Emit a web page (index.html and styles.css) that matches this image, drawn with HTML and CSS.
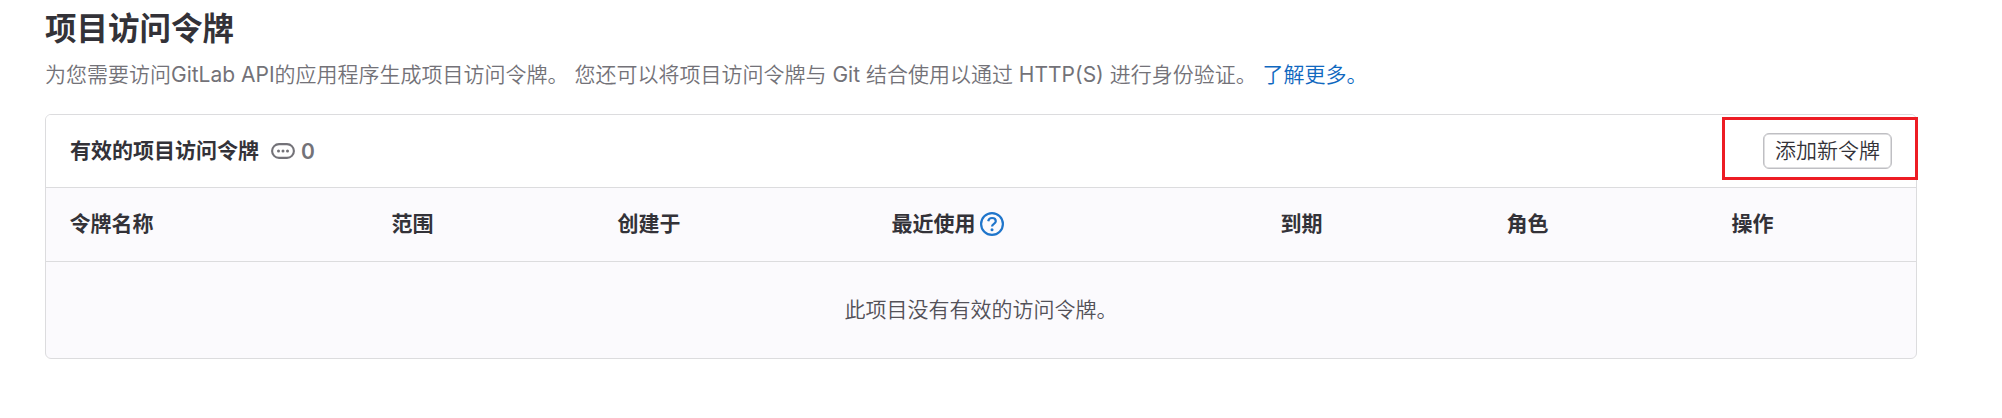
FILE: index.html
```html
<!DOCTYPE html>
<html lang="zh-CN">
<head>
<meta charset="utf-8">
<title>项目访问令牌</title>
<link rel="stylesheet" href="styles.css">
</head>
<body>
<main class="page">
  <h1 class="title">项目访问令牌</h1>
  <p class="intro">为您需要访问<span class="latin">GitLab API</span>的应用程序生成项目访问令牌。 您还可以将项目访问令牌与 <span class="latin">Git</span> 结合使用以通过 <span class="latin">HTTP(S)</span> 进行身份验证。 <a class="link">了解更多。</a></p>
  <section class="card">
    <header class="card-header">
      <h2 class="card-title">有效的项目访问令牌</h2>
      <svg class="token-icon" viewBox="0 0 24 24" fill="none" stroke="currentColor" stroke-width="2.1">
        <rect x="1.1" y="5.1" width="21.8" height="13.8" rx="6.9"/>
        <g fill="currentColor" stroke="none"><circle cx="7.5" cy="12" r="1.5"/><circle cx="12" cy="12" r="1.5"/><circle cx="16.5" cy="12" r="1.5"/></g>
      </svg>
      <span class="count">0</span>
      <div class="action"><button class="button">添加新令牌</button><span class="highlight"></span></div>
    </header>
    <div class="row">
      <div>令牌名称</div>
      <div>范围</div>
      <div>创建于</div>
      <div class="last-used">最近使用
        <svg class="help-icon" viewBox="0 0 24 24" fill="none" stroke="currentColor" stroke-width="2.2">
          <circle cx="12" cy="12" r="10.9"/>
          <path d="M8.2 9.2C8.6 7.2 10 6 12 6c2.3 0 3.8 1.3 3.8 3.2 0 2.5-3.8 2.7-3.8 5.2"/>
          <circle cx="12" cy="17.7" r="1.5" fill="currentColor" stroke="none"/>
        </svg>
      </div>
      <div>到期</div>
      <div>角色</div>
      <div>操作</div>
    </div>
    <div class="empty">此项目没有有效的访问令牌。</div>
  </section>
</main>
</body>
</html>
```
FILE: styles.css
```css
* { box-sizing: border-box; }
body {
  margin: 0;
  background: #fff;
  color: #333238;
  font-family: Inter, "Noto Sans CJK SC", sans-serif;
  font-size: 21px;
  line-height: 30px;
}
.page { padding: 11px 85px 0 45px; }
.title { margin: 0; font-size: 31.5px; line-height: 36px; font-weight: 700; }
.intro { margin: 13px 0 0; height: 54px; color: #737278; white-space: nowrap; font-weight: 350; }
.latin { font-weight: 400; }
.link { color: #1068bf; }
.card { height: 245px; border: 1px solid #dcdcde; border-radius: 6px; background: #fbfafd; }
.card-header {
  display: flex;
  align-items: center;
  height: 73px;
  padding: 0 24px;
  border-bottom: 1px solid #dcdcde;
  border-radius: 5px 5px 0 0;
  background: #fff;
}
.card-title { margin: 0; font-size: 21px; line-height: 30px; font-weight: 700; }
.token-icon { width: 24px; height: 24px; margin-left: 12px; color: #737278; }
.count { margin-left: 6px; padding-top: 1px; color: #737278; font-weight: 600; }
.action { position: relative; margin-left: auto; }
.button {
  display: block;
  width: 129px;
  height: 36px;
  padding: 0;
  border: 1px solid #bfbfc3;
  border-radius: 6px;
  box-shadow: inset 0 0 0 0.5px #bfbfc3;
  background: #fff;
  color: #333238;
  font: inherit;
  font-weight: 350;
  line-height: 30px;
}
.highlight {
  position: absolute;
  inset: -16px -26px -11px -41px;
  border: 3px solid #ed1c24;
  pointer-events: none;
}
.row {
  display: grid;
  grid-template-columns: 322px 226px 274px 389px 226px 225px 1fr;
  align-items: center;
  height: 74px;
  padding: 0 0 1px 23.5px;
  border-bottom: 1px solid #dcdcde;
  font-weight: 700;
}
.last-used { display: flex; align-items: center; gap: 4.5px; }
.help-icon { width: 24px; height: 24px; color: #1f75cb; }
.empty { display: flex; align-items: center; justify-content: center; height: 96px; color: #535158; font-weight: 350; }
```
